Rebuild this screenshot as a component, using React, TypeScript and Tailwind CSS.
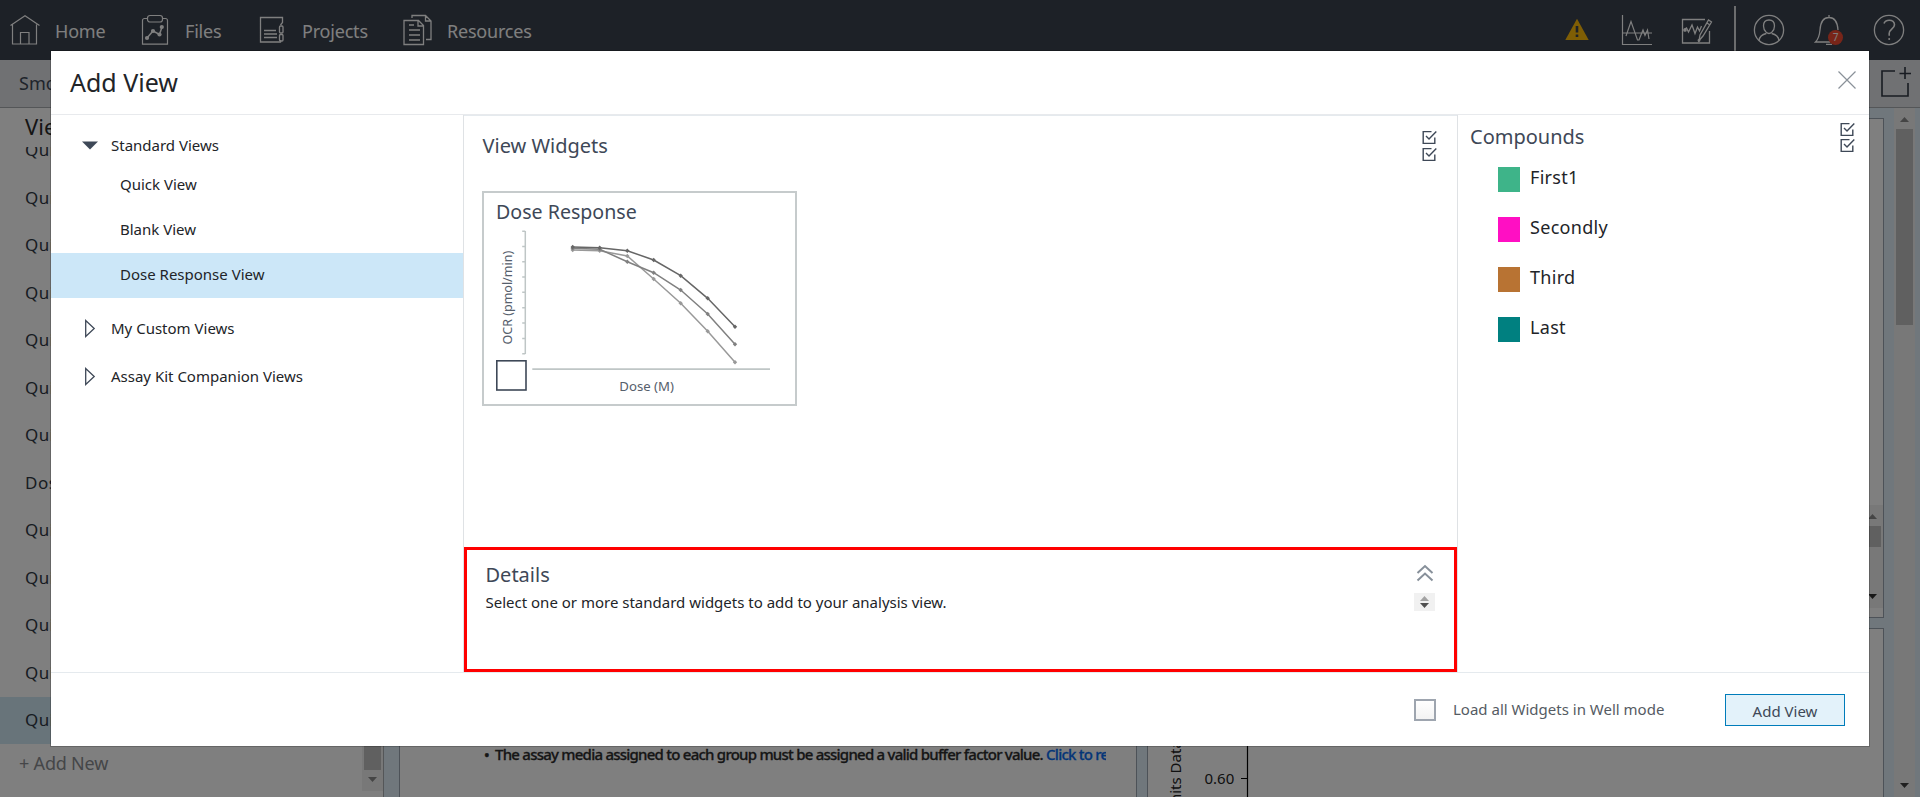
import React from "react";

const viewRows = ["Quick View", "Quick View", "Quick View", "Quick View", "Quick View", "Quick View", "Quick View", "Dose Response", "Quick View", "Quick View", "Quick View", "Quick View"];

const compounds = [
  { name: "First1", color: "bg-[#3eb489]" },
  { name: "Secondly", color: "bg-[#ff0fc3]" },
  { name: "Third", color: "bg-[#b87333]" },
  { name: "Last", color: "bg-[#008080]" },
];

const xs = [90.7, 117.7, 145.3, 171.7, 198.7, 225.7, 253];
const series = [
  { color: "#999999", ys: [59, 59.7, 65, 88, 112.3, 140.3, 171.3] },
  { color: "#808080", ys: [57.3, 58.3, 70.7, 81.7, 99, 123, 153.3] },
  { color: "#666666", ys: [56, 56.7, 59.7, 69, 84.7, 107.3, 135.7] },
];

function HomeIcon() {
  return (
    <svg className="h-8 w-8" viewBox="0 0 32 32" fill="none" stroke="#fff" strokeWidth="1.2">
      <path d="M1.500 11.500 16 1.800l14.500 9.700M3.500 10.500v19.500h24V10.500M11.500 30V18.500h8.500V30" />
    </svg>
  );
}

function FilesIcon() {
  return (
    <svg className="h-8 w-[28px]" viewBox="0 0 28 32" fill="none" stroke="#fff" strokeWidth="1.2">
      <path d="M6 4.500H3.500a2 2 0 0 0-2 2v23.700h25V6.500a2 2 0 0 0-2-2H22" />
      <rect x="6.500" y="1.500" width="15" height="6.500" rx="2.500" />
      <path d="M6 24l6-7 6.500 3.500L21 13" strokeWidth="1.500" />
      <g fill="#fff" stroke="none">
        <circle cx="6" cy="24" r="2.100" /><circle cx="12" cy="17" r="2.100" />
        <circle cx="18.500" cy="20.500" r="2.100" /><circle cx="20.800" cy="13" r="2.100" />
      </g>
    </svg>
  );
}

function ProjectsIcon() {
  return (
    <svg className="h-[28px] w-[26px]" viewBox="0 0 26 28" fill="none" stroke="#fff" strokeWidth="1.300">
      <path d="M20 1.500H1.500v24.500h20V24M20 1.500h3.500v5l-2 2.500M5 14.500h12M5 18h13M5 21.500h13" />
      <rect x="20.500" y="10" width="3.500" height="7" rx="1" />
      <rect x="20.500" y="18.500" width="3.500" height="6.500" rx="1" />
    </svg>
  );
}

function ResourcesIcon() {
  return (
    <svg className="h-8 w-[29px]" viewBox="0 0 29 32" fill="none" stroke="#fff" strokeWidth="1.300">
      <path d="M1 6.500h14.500l5 5V30.500H1zM15 6.500V12h5.500M9 4V1.500h13.500l5.500 5.500v18.500h-5M22.500 1.500V7H28M6 11h5M6 16h11M6 21h11M6 26h11" />
    </svg>
  );
}

function PeaksIcon() {
  return (
    <svg className="h-8 w-8" viewBox="0 0 32 32" fill="none" stroke="#fff" strokeWidth="1.200">
      <path d="M1.500 1v29.500H31M1.500 19H31M5 22l5-14.500 6.500 18.500h1.500l4-10 2 5.500 2.500-5.500L28 25" />
    </svg>
  );
}

function EditChartIcon() {
  return (
    <svg className="h-8 w-8" viewBox="0 0 32 32" fill="none" stroke="#fff" strokeWidth="1.300">
      <path d="M24 5.500H1.500v23.500h27V17" />
      <path d="M3 15.500l2.500-1.500 2 4 3.500-7 3 8.500 2.500-6.500 2 4 2-5M18 26.500l1-5.500L27.500 6l3 2L22 22zM26 9l3 2" />
      <circle cx="4" cy="16" r="1.200" fill="#fff" />
      <circle cx="18" cy="26.500" r="0.800" fill="#fff" />
    </svg>
  );
}

function UserIcon() {
  return (
    <svg className="h-8 w-8" viewBox="0 0 32 32" fill="none" stroke="#fff" strokeWidth="1.300">
      <circle cx="16" cy="16" r="14.600" />
      <path d="M10.500 12c0-4 2.300-6 5.500-6s5.500 2 5.500 6c0 3-1.300 5-2.700 6.300-1.600 1.400-4 1.400-5.600 0C11.800 17 10.500 15 10.500 12zM6 26.500c.5-4 3-6 7.300-7M26 26.500c-.5-4-3-6-7.300-7" />
    </svg>
  );
}

function BellIcon() {
  return (
    <svg className="h-8 w-[30px]" viewBox="0 0 30 32" fill="none" stroke="#fff" strokeWidth="1.300">
      <path d="M15 1v2.500M16 28H1.500c3.500-3.500 4-6.500 4.500-12 .5-8 3.500-12.500 9-12.500s8.500 4.500 9 12.500M12 30.300h6" />
    </svg>
  );
}

function HelpIcon() {
  return (
    <svg className="h-8 w-8" viewBox="0 0 32 32" fill="none" stroke="#fff" strokeWidth="1.300">
      <circle cx="16" cy="16" r="14.600" />
      <path d="M11 9.500c.7-2.200 2.500-3.300 5.200-3.300 3 0 5.300 1.800 5.300 4.600 0 4-5.300 4.300-5.300 8.700v2.200" strokeWidth="1.600" />
      <circle cx="16.200" cy="25" r="1" fill="#fff" stroke="none" />
    </svg>
  );
}

function CheckPair({ tight }: { tight?: boolean }) {
  const box = (
    <svg className="h-[15px] w-[15px]" viewBox="0 0 15 15" fill="none" stroke="#3e4857" strokeWidth="1.400">
      <path d="M9.500 1.600H1.200v11.800h11.600V7.500M4 6l3 3 7.300-7.500" />
    </svg>
  );
  return (
    <div className={tight ? "flex flex-col gap-[1px]" : "flex flex-col gap-[2px]"}>
      {box}
      {box}
    </div>
  );
}

function Arrow({ up, className }: { up?: boolean; className: string }) {
  return (
    <svg className={"h-[5px] w-[9px] " + className} viewBox="0 0 9 5" fill="currentColor">
      <path d={up ? "M0 5 4.500 0 9 5z" : "M0 0 4.500 5 9 0z"} />
    </svg>
  );
}

function Background() {
  return (
    <div className="flex h-[797px] w-full flex-col bg-[#e0eef8]">
      <header className="flex h-[60px] shrink-0 items-start bg-[#3a424e] text-lg leading-[60px] text-white">
        <nav className="flex h-[60px] items-center">
          <div className="flex w-[132px] items-center gap-[14px] pl-[9px]"><HomeIcon /><span className="pt-[2px] tracking-[-0.2px]">Home</span></div>
          <div className="flex w-[126px] items-center gap-[16px] pl-[9px]"><FilesIcon /><span className="pt-[2px] tracking-[-0.2px]">Files</span></div>
          <div className="flex w-[135px] items-center gap-[17px] pl-[1px]"><ProjectsIcon /><span className="pt-[2px] tracking-[-0.2px]">Projects</span></div>
          <div className="flex items-center gap-[15px] pl-[10px]"><ResourcesIcon /><span className="pt-[2px] tracking-[-0.2px]">Resources</span></div>
        </nav>
        <div className="ml-auto flex h-[60px] items-center pr-[15px]">
          <svg className="mr-[32px] h-6 w-6" viewBox="0 0 24 24">
            <path d="M12 0.800 23.700 22H.3z" fill="#ffbc0a" />
            <path d="M10.700 8h2.600v6.500h-2.600zM10.700 16.500h2.600v2.500h-2.600z" fill="#3a424e" />
          </svg>
          <PeaksIcon />
          <div className="w-[28px]" />
          <EditChartIcon />
          <div className="ml-[21px] mr-[17px] h-[60px] pt-[6px]"><div className="h-[48px] w-[2px] bg-[#d8dadc]" /></div>
          <UserIcon />
          <div className="relative ml-[29px] mr-[29px] flex">
            <BellIcon />
            <span className="absolute left-[14px] top-[16px] h-[15px] w-[15px] rounded-full bg-[#f04b32] text-center text-[10px] leading-[15px]">7</span>
          </div>
          <HelpIcon />
        </div>
      </header>
      <div className="flex h-[48px] shrink-0 items-center justify-between border-b border-[#a8acb0] bg-[#e0e2e6] pb-[3px] pl-[19px] pr-[9px]">
        <span className="pt-px text-lg text-[#3e4857]">Smoke Test</span>
        <svg className="h-8 w-8" viewBox="0 0 32 32" fill="none" stroke="#303844" strokeWidth="1.600">
          <path d="M16 5H3v25h26V17M26 1v12M20.500 7.500H32" />
        </svg>
      </div>
      <div className="flex min-h-0 flex-1">
        <aside className="flex w-[384px] shrink-0 border-r border-[#a8acb0] bg-white">
          <div className="flex w-[362px] flex-col">
            <div className="h-[39px] pl-[25px] pt-[2px] text-[22px] leading-[32px] text-[#2b2b2b]">Views</div>
            <div className="flex h-[597px] shrink-0 flex-col justify-end overflow-hidden text-[17px] tracking-[0.5px] text-[#303844]">
              {viewRows.map((v, i) => (
                <div key={i} className="flex h-[47.5px] shrink-0 items-center pb-[1.5px] pl-[25px]">{v}</div>
              ))}
              <div className="flex h-[47px] shrink-0 items-center bg-[#d0e9f5] pb-[2px] pl-[25px]">Quick View</div>
            </div>
            <div className="pl-[19px] pt-[5px] text-[18px] leading-[28px] tracking-[-0.2px] text-[#8a8d91]">+ Add New</div>
          </div>
          <div className="flex h-[683px] w-[21px] flex-col items-center bg-[#f1f1f1]">
            <div className="mt-[400px] h-[262px] w-[17px] bg-[#c1c1c1]" />
            <Arrow className="mt-[7px] text-[#8a8a8a]" />
          </div>
        </aside>
        <section className="ml-[15px] mt-[10px] flex w-[738px] items-start border border-b-0 border-[#9aa5b0] bg-white pl-[84px] pt-[624px]">
          <div className="flex w-[622px] overflow-hidden whitespace-nowrap text-[15px] font-medium leading-[22px] tracking-[-0.76px] text-[#2c2c2c] [-webkit-text-stroke:0.3px]">
            <span className="w-[11px] shrink-0">•</span>
            <span>The assay media assigned to each group must be assigned a valid buffer factor value. <span className="text-[#0a6cf0]">Click to review</span></span>
          </div>
        </section>
        <div className="ml-[10px] mt-[10px] flex w-[737px] flex-col gap-[10px]">
          <section className="flex h-[500px] shrink-0 justify-end border border-[#9aa5b0] bg-white pt-[386px]">
            <div className="flex h-[103px] w-[21px] flex-col items-center bg-[#f1f1f1]">
              <Arrow up className="mt-[9px] text-[#8a8a8a]" />
              <div className="mt-[7px] h-[21px] w-[17px] bg-[#c1c1c1]" />
              <Arrow className="mt-[47px] text-[#303030]" />
            </div>
          </section>
          <section className="flex min-h-0 flex-1 overflow-hidden border border-b-0 border-[#9aa5b0] bg-white">
            <svg className="h-[168px] w-[200px]" viewBox="0 0 200 168" fontSize="15">
              <text transform="translate(33 185) rotate(-90)" fill="#222">Units Data</text>
              <text x="56.500" y="154.500" fill="#222">0.60</text>
              <path d="M93 149.500h6M99.500 0v168" stroke="#000" strokeWidth="1.200" />
            </svg>
          </section>
        </div>
        <div className="ml-[10px] flex w-[21px] flex-col items-center bg-[#f1f1f1] pt-[9px]">
          <Arrow up className="text-[#8a8a8a]" />
          <div className="mt-[7px] h-[196px] w-[17px] bg-[#c1c1c1]" />
          <Arrow className="mb-[9px] mt-auto text-[#404040]" />
        </div>
      </div>
    </div>
  );
}

function DoseCard() {
  return (
    <div className="ml-[18px] mt-[29px] h-[215px] w-[315px] border-2 border-[#c6cbcc]">
      <svg className="-ml-[2px] -mt-[2px] h-[215px] w-[315px]" viewBox="0 0 315 215" fill="none">
        <text x="14" y="28" fontSize="19.600" fill="#3e4857">Dose Response</text>
        <path d="M43.300 40v123M40.200 40.300h3M40.200 55.500h3M40.200 70.700h3M40.200 86h3M40.200 101.300h3M40.200 116.700h3M40.200 132h3M40.200 147.500h3M40.200 162.700h3" stroke="#bfc6c6" strokeWidth="1.500" />
        <path d="M50.300 178.200H288" stroke="#bfc6c6" strokeWidth="1.800" />
        <text transform="translate(30.300 153.500) rotate(-90)" fontSize="12.500" fill="#56606c">OCR (pmol/min)</text>
        <text x="137.300" y="200" fontSize="13.200" fill="#56606c">Dose (M)</text>
        {series.map((s) => (
          <g key={s.color} stroke={s.color} fill={s.color}>
            <polyline points={s.ys.map((y, i) => xs[i] + "," + y).join(" ")} fill="none" strokeWidth="1.500" />
            {s.ys.map((y, i) => (
              <path key={i} d={`M${xs[i]} ${y - 2.2}l2.200 2.200-2.200 2.200-2.200-2.200z`} stroke="none" />
            ))}
          </g>
        ))}
        <rect x="14.800" y="169.800" width="29.200" height="29.200" stroke="#3e4857" strokeWidth="1.600" fill="#fff" />
      </svg>
    </div>
  );
}

function ClosedMarker() {
  return (
    <svg className="mr-[15px] h-[19px] w-[12px]" viewBox="0 0 12 19" fill="none" stroke="#3e4857" strokeWidth="1.300">
      <path d="M1.700 1.500v16l8.500-8z" />
    </svg>
  );
}

function Modal() {
  return (
    <div role="dialog" className="absolute left-[51px] top-[51px] flex h-[695px] w-[1818px] flex-col bg-white shadow-[0_0_0_1px_rgba(0,0,0,0.2)]">
      <div className="flex h-[64px] shrink-0 items-start justify-between border-b border-[#e8eaed] pl-[19px] pr-[12px]">
        <h1 className="pt-[13px] text-[25px] leading-[36px] text-[#222428]">Add View</h1>
        <svg className="mt-[19px] h-5 w-5" viewBox="0 0 20 20" stroke="#8a9199" strokeWidth="1.200">
          <path d="M1.500 1.500l17 17M18.500 1.500l-17 17" />
        </svg>
      </div>
      <div className="flex min-h-0 flex-1">
        <aside className="flex w-[413px] shrink-0 flex-col border-r border-[#dfe2e5] text-[15px] text-[#222428]">
          <div className="flex h-[48px] items-center pl-[31px] pt-[12px]">
            <svg className="mr-[13px] h-[9px] w-[16px]" viewBox="0 0 16 9" fill="#3e4857"><path d="M0 .5h16L8 8.500z" /></svg>
            Standard Views
          </div>
          <div className="flex h-[45px] items-center pb-[2px] pl-[69px]">Quick View</div>
          <div className="flex h-[45px] items-center pb-[2px] pl-[69px]">Blank View</div>
          <div className="flex h-[45px] items-center bg-[#cce7f8] pb-[2px] pl-[69px]">Dose Response View</div>
          <div className="mt-[7px] flex h-[48px] items-center pb-[2px] pl-[33px]"><ClosedMarker />My Custom Views</div>
          <div className="flex h-[48px] items-center pb-[2px] pl-[33px]"><ClosedMarker />Assay Kit Companion Views</div>
        </aside>
        <main className="flex w-[993px] shrink-0 flex-col">
          <div className="flex flex-1 flex-col border-t border-[#e5eaee]">
            <div className="flex items-start justify-between pl-[18.500px] pr-[20px] pt-[14px]">
              <h2 className="pt-[1px] text-xl leading-[30px] text-[#3e4857]">View Widgets</h2>
              <CheckPair />
            </div>
            <DoseCard />
          </div>
          <section className="flex h-[125px] shrink-0 justify-between border-[3px] border-[#ff0000] pl-[18.500px] pr-[18px]">
            <div>
              <h2 className="pt-[10px] text-xl leading-[30px] text-[#3e4857]">Details</h2>
              <p className="-mt-px text-[15px] leading-[26px] text-[#222428]">Select one or more standard widgets to add to your analysis view.</p>
            </div>
            <div className="flex flex-col items-center">
              <svg className="mt-[14px] h-[18px] w-[18px]" viewBox="0 0 18 18" fill="none" stroke="#87909a" strokeWidth="2">
                <path d="M1.500 9 9 2 16.500 9M1.500 16.500 9 9.500l7.500 7" />
              </svg>
              <div className="mr-px mt-[11px] flex h-[18px] w-[21px] flex-col items-center justify-center gap-[2px] bg-[#f1f1f1]">
                <Arrow up className="text-[#a3a3a3]" />
                <Arrow className="text-[#505050]" />
              </div>
            </div>
          </section>
        </main>
        <aside className="flex-1 border-l border-[#dfe2e5]">
          <div className="flex items-start justify-between pl-[12px] pr-[14px] pt-[7px]">
            <h2 className="text-xl leading-[30px] text-[#3e4857]">Compounds</h2>
            <CheckPair tight />
          </div>
          <ul className="flex flex-col gap-[25px] pl-[40px] pt-[14px]">
            {compounds.map((c) => (
              <li key={c.name} className="flex h-[25px] gap-[10px]">
                <span className={"h-[25px] w-[22px] " + c.color} />
                <span className="text-lg leading-[20px] tracking-[0.3px] text-[#222428]">{c.name}</span>
              </li>
            ))}
          </ul>
        </aside>
      </div>
      <footer className="flex h-[74px] shrink-0 items-center justify-end border-t border-[#e5eaee] pr-[24px]">
        <span className="h-[22px] w-[22px] border-2 border-[#9ea5af] bg-gradient-to-b from-white to-[#f3f3f3]" />
        <span className="ml-[17px] w-[272px] text-[15px] text-[#555b63]">Load all Widgets in Well mode</span>
        <button className="h-[32px] w-[120px] border border-[#007cba] bg-[#e3f2fa] pt-[2px] text-[15px] leading-[28px] text-[#3e4857]">Add View</button>
      </footer>
    </div>
  );
}

export default function App() {
  return (
    <div className="relative h-[797px] w-[1920px] overflow-hidden font-['Noto_Sans',sans-serif]">
      <Background />
      <div className="absolute inset-0 bg-black/50" />
      <Modal />
    </div>
  );
}
